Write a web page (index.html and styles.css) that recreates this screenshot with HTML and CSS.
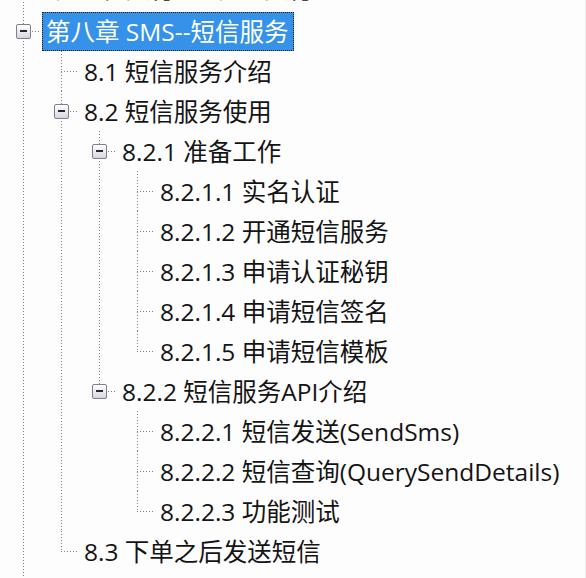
FILE: index.html
```html
<!DOCTYPE html>
<html>
<head>
  <title>目录</title>
  <meta charset="utf-8">
  <link rel="stylesheet" href="styles.css">
</head>
<body>
  <div class="panel">
    <ul class="tree">
      <li>
        <div class="row partial"><span class="twist"><span class="box plus"></span></span><span class="label">第七章 支付宝--在线支付</span></div>
      </li>
      <li>
        <div class="row"><span class="twist"><span class="box"></span></span><span class="label selected">第八章 SMS--短信服务</span></div>
        <ul>
          <li><div class="row"><span class="twist"></span><span class="label">8.1 短信服务介绍</span></div></li>
          <li>
            <div class="row"><span class="twist"><span class="box"></span></span><span class="label">8.2 短信服务使用</span></div>
            <ul>
              <li>
                <div class="row"><span class="twist"><span class="box"></span></span><span class="label">8.2.1 准备工作</span></div>
                <ul>
                  <li><div class="row"><span class="twist"></span><span class="label">8.2.1.1 实名认证</span></div></li>
                  <li><div class="row"><span class="twist"></span><span class="label">8.2.1.2 开通短信服务</span></div></li>
                  <li><div class="row"><span class="twist"></span><span class="label">8.2.1.3 申请认证秘钥</span></div></li>
                  <li><div class="row"><span class="twist"></span><span class="label">8.2.1.4 申请短信签名</span></div></li>
                  <li><div class="row"><span class="twist"></span><span class="label">8.2.1.5 申请短信模板</span></div></li>
                </ul>
              </li>
              <li>
                <div class="row"><span class="twist"><span class="box"></span></span><span class="label">8.2.2 短信服务API介绍</span></div>
                <ul>
                  <li><div class="row"><span class="twist"></span><span class="label">8.2.2.1 短信发送(SendSms)</span></div></li>
                  <li><div class="row"><span class="twist"></span><span class="label">8.2.2.2 短信查询(QuerySendDetails)</span></div></li>
                  <li><div class="row"><span class="twist"></span><span class="label">8.2.2.3 功能测试</span></div></li>
                </ul>
              </li>
            </ul>
          </li>
          <li><div class="row"><span class="twist"></span><span class="label">8.3 下单之后发送短信</span></div></li>
        </ul>
      </li>
    </ul>
  </div>
</body>
</html>
```

FILE: styles.css
```css
html, body {
  margin: 0;
  height: 100%;
  overflow: hidden;
  background-color: #fdfdfe;
}
/* Outer panel of the tree view */
.panel {
  height: 100%;
  box-sizing: border-box;
  border-right: 1px solid #ececf0;
  overflow: hidden;
}
.tree {
  margin: -34px 0 0 0;
  padding-left: 4px;
  font-family: "Open Sans", "Noto Sans CJK SC", sans-serif;
  font-size: 24.5px;
  color: #141414;
}
.tree, .tree ul {
  list-style: none;
}
.tree ul {
  margin: 0;
  padding-left: 38px;
}
/* Vertical dotted line of each level */
.tree li {
  background: repeating-linear-gradient(to bottom, #7e7e7e 0 1px, transparent 1px 3px) 19px 0 / 1px 100% no-repeat;
}
.tree li:last-child {
  background-size: 1px 20px;
}
/* more chapters follow below the visible area */
.tree > li:last-child {
  background-size: 1px 100%;
  padding-bottom: 30px;
}
.row {
  display: flex;
  align-items: center;
  height: 40px;
}
/* row scrolled mostly out of view */
.row.partial {
  height: 45px;
}
/* Horizontal connector + expander */
.twist {
  flex: none;
  width: 38px;
  height: 100%;
  display: flex;
  align-items: center;
  justify-content: center;
  background: repeating-linear-gradient(to right, #7e7e7e 0 1px, transparent 1px 3px) 19px 50% / 17px 1px no-repeat;
}
.box {
  position: relative;
  width: 15px;
  height: 15px;
  box-sizing: border-box;
  border: 1px solid #7d7f8e;
  border-radius: 2px;
  background: linear-gradient(#ffffff, #d6d6df);
}
.box::before {
  content: "";
  position: absolute;
  left: 3px;
  top: 5px;
  width: 7px;
  height: 2px;
  background-color: #26263a;
}
.box.plus::after {
  content: "";
  position: absolute;
  left: 5.5px;
  top: 2.5px;
  width: 2px;
  height: 7px;
  background-color: #26263a;
}
.label {
  height: 39px;
  line-height: 39px;
  padding: 0 5px 0 4px;
  white-space: nowrap;
  box-sizing: border-box;
}
.selected {
  background-color: #3592e8;
  color: #ffffff;
  outline: 1px dotted #1c1c1c;
  outline-offset: -1px;
}
```
